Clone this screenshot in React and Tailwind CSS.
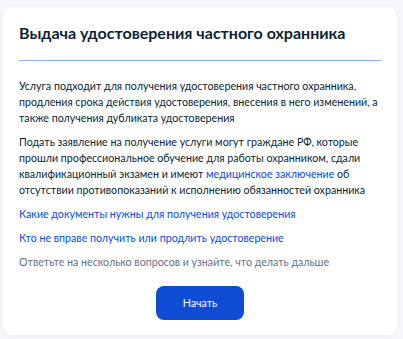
import React from 'react';

const App = () => {
    return (
        <div className="min-h-screen bg-[#f5f7fb] pt-[7px] px-[3px] pb-[5px]" style={{ fontFamily: 'Lato, "Noto Sans", sans-serif' }}>
            <div className="w-[394px] bg-white rounded-[8px] shadow-[0_1px_4px_rgba(11,31,51,0.06)] px-4 pt-4 pb-[15px] text-[#0b1f33]">
                {/* Header */}
                <h1 className="text-[16px] leading-[20px] font-bold">Выдача удостоверения частного охранника</h1>
                <div className="mt-[17px] h-px bg-[#8eaaf0]"></div>

                {/* Body */}
                <p className="mt-[17px] text-[10.67px] leading-[16px]">
                    Услуга подходит для получения удостоверения частного охранника, продления срока действия удостоверения, внесения в него изменений, а также получения дубликата удостоверения
                </p>
                <p className="mt-[8px] text-[10.67px] leading-[16px]">
                    Подать заявление на получение услуги могут граждане РФ, которые прошли профессиональное обучение для работы охранником, сдали квалификационный экзамен и имеют <a className="text-[#0d4cd3]">медицинское заключение</a> об отсутствии противопоказаний к исполнению обязанностей охранника
                </p>
                <a className="block mt-[8px] text-[10.67px] leading-[16px] text-[#0d4cd3]">Какие документы нужны для получения удостоверения</a>
                <a className="block mt-[8px] text-[10.67px] leading-[16px] text-[#0d4cd3]">Кто не вправе получить или продлить удостоверение</a>
                <p className="mt-[8px] text-[10.67px] leading-[16px] text-[#66727f]">Ответьте на несколько вопросов и узнайте, что делать дальше</p>

                <div className="mt-4 flex justify-center">
                    <button className="w-[88px] h-[34px] rounded-[8px] bg-[#0d4cd3] text-white text-[10.67px]">Начать</button>
                </div>
            </div>
        </div>
    );
};

export default App;
